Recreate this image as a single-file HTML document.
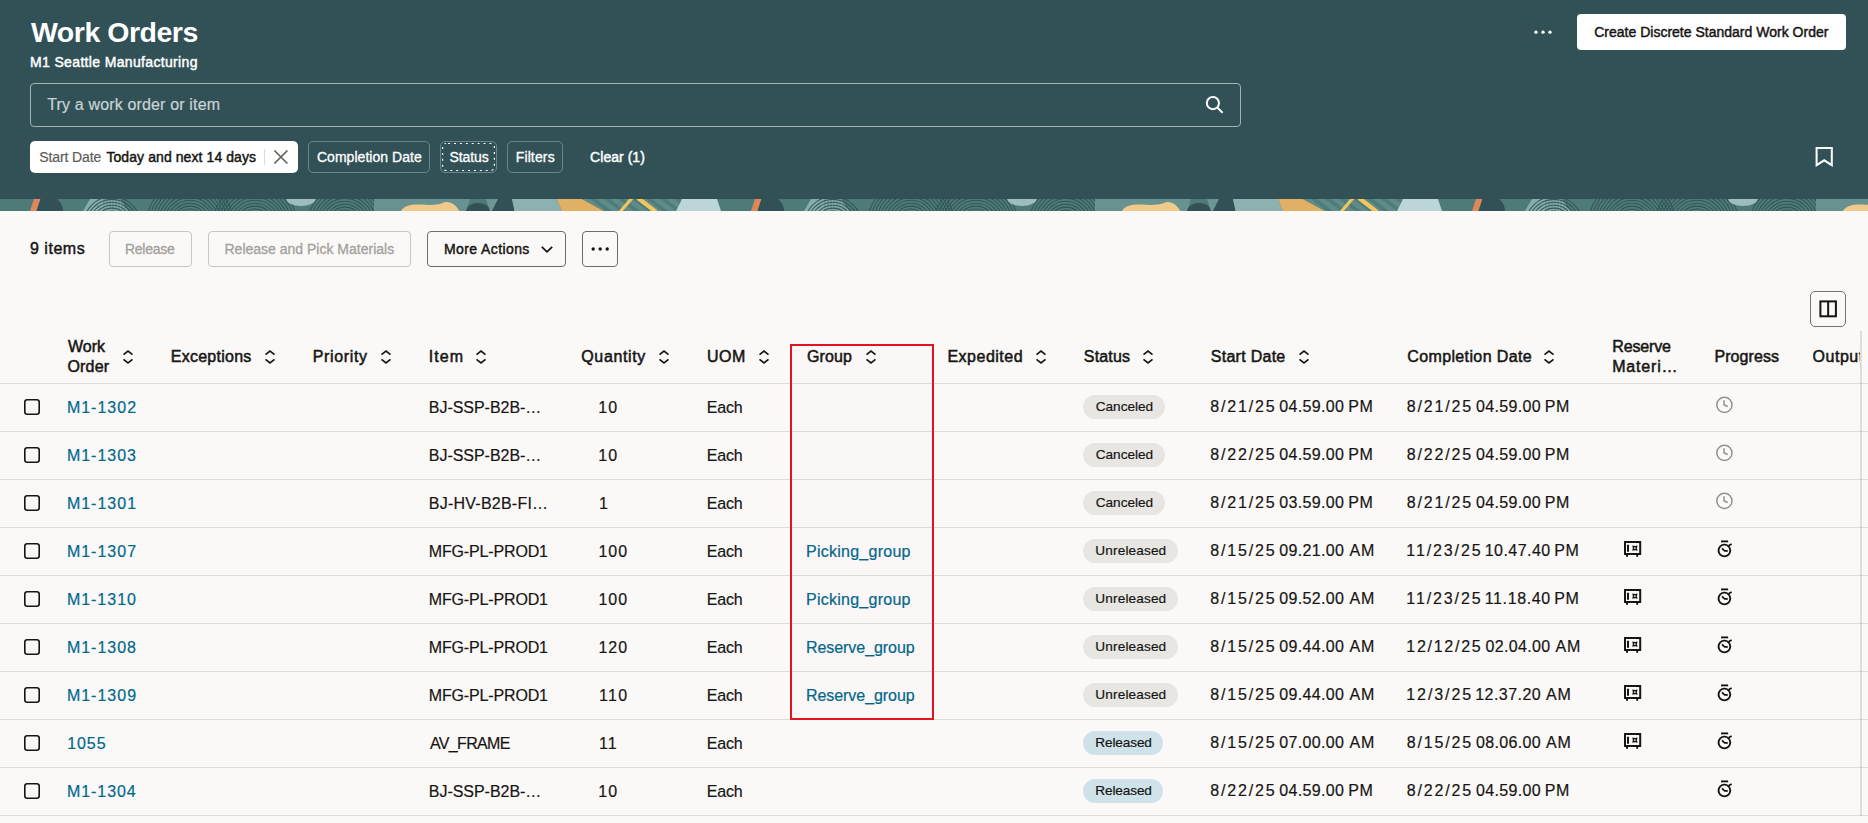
<!DOCTYPE html>
<html lang="en">
<head>
<meta charset="utf-8">
<title>Work Orders</title>
<style>
html,body{margin:0;padding:0}
body{width:1868px;height:823px;overflow:hidden;background:#fbf9f8;font-family:"Liberation Sans",Arial,sans-serif;color:#161513;position:relative}
.t{position:absolute;white-space:pre;line-height:20px;display:block}
a.t{text-decoration:none}
#hdr{position:absolute;left:0;top:0;width:1868px;height:199px;background:#315157}
#strip{position:absolute;left:0;top:199px;width:1868px;height:12px;overflow:hidden;background:#4f7c7a}
.search{position:absolute;left:30px;top:83px;width:1209px;height:42px;border:1px solid #a3b2b5;border-radius:4px}
.cta{position:absolute;left:1577px;top:14px;width:269px;height:36px;border-radius:4px;background:#fff}
.chipw{position:absolute;left:30px;top:141px;width:268px;height:32px;border-radius:5px;background:#fff}
.chip{position:absolute;top:141px;height:30px;border:1px solid #64898c;border-radius:5px}
.chipsep{position:absolute;left:264px;top:149px;width:1px;height:16px;background:#dcd9d6}
.dash{position:absolute;left:2px;top:2px;right:2px;bottom:2px;border:1px dashed #fff;border-radius:4px}
.tbb{position:absolute;top:231px;height:34px;border:1px solid #c9c6c3;border-radius:4px}
.tbb.on{border-color:#6f6b67}
.ck{position:absolute;left:24px;width:12px;height:12px;border:2px solid #161513;border-radius:3px}
.badge{position:absolute;left:1083px;height:24px;border-radius:12px}
.badge.gr{background:#e8e6e3}
.badge.bl{background:#cfe1e9}
.hl{position:absolute;left:0;width:1868px;height:1px;background:#dddbda}
.ic{position:absolute;overflow:visible}
#redbox{z-index:5;position:absolute;left:790px;top:344px;width:140px;height:372px;border:2px solid #e3131f;background:rgba(255,80,80,0.012)}
#vline{position:absolute;left:1860px;top:331px;width:2px;height:485px;background:rgba(22,21,19,0.12)}
.colbtn{position:absolute;left:1810px;top:291px;width:34px;height:34px;border:1px solid #76726e;border-radius:5px}
</style>
</head>
<body>
<header id="hdr">
  <span class="t h1" style="left:30.97px;top:22.20px;font-size:28.5px;letter-spacing:-0.483px;color:#fff;font-weight:700">Work Orders</span>
  <span class="t sub" style="left:30.08px;top:52.30px;font-size:14px;letter-spacing:0.342px;color:#fff;-webkit-text-stroke:0.45px #fff">M1 Seattle Manufacturing</span>
  <div class="search"></div>
  <span class="t ph" style="left:47.24px;top:94.70px;font-size:16px;letter-spacing:0.156px;color:#c9d4d5;-webkit-text-stroke:0.2px #c9d4d5">Try a work order or item</span>
  <svg class="ic" style="left:1200px;top:91px" width="28" height="28" viewBox="1200 91 28 28"><circle cx="1212.9" cy="103.1" r="6.1" fill="none" stroke="#fff" stroke-width="2"/><path d="M1217.4 107.6L1222.6 112.8" stroke="#fff" stroke-width="2" fill="none"/></svg>
  <svg class="ic" style="left:1530px;top:28px" width="26" height="8" viewBox="1530 28 26 8"><circle cx="1536" cy="32.2" r="1.65" fill="#fff"/><circle cx="1543" cy="32.2" r="1.65" fill="#fff"/><circle cx="1550" cy="32.2" r="1.65" fill="#fff"/></svg>
  <div class="cta"></div>
  <span class="t btn" style="left:1594.21px;top:21.70px;font-size:14px;letter-spacing:0.007px;color:#161513;-webkit-text-stroke:0.45px #161513">Create Discrete Standard Work Order</span>
  <div class="chipw"></div><div class="chipsep"></div>
  <span class="t cht" style="left:39.21px;top:147.20px;font-size:14px;letter-spacing:-0.103px;color:#5f5b57;-webkit-text-stroke:0.2px #5f5b57">Start Date</span>
  <span class="t cht" style="left:106.41px;top:147.20px;font-size:14px;letter-spacing:0.085px;color:#161513;-webkit-text-stroke:0.45px #161513">Today and next 14 days</span>
  <svg class="ic" style="left:270px;top:146px" width="22" height="22" viewBox="270 146 22 22"><path d="M274.4 150.5L287.4 163.5M287.4 150.5L274.4 163.5" stroke="#665f5a" stroke-width="1.7" fill="none"/></svg>
  <div class="chip" style="left:308px;width:120px"></div>
  <span class="t cht" style="left:316.94px;top:147.20px;font-size:14px;letter-spacing:0.039px;color:#fff;-webkit-text-stroke:0.3px #fff">Completion Date</span>
  <div class="chip" style="left:440px;width:55px"></div>
  <svg class="ic" style="left:440px;top:141px" width="57" height="32" viewBox="440 141 57 32"><rect x="442.6" y="143.5" width="51.8" height="27" rx="3.5" fill="none" stroke="#fff" stroke-width="1.2" stroke-dasharray="2 3.9" stroke-dashoffset="-2"/></svg>
  <span class="t cht" style="left:449.51px;top:147.20px;font-size:14px;letter-spacing:-0.112px;color:#fff;-webkit-text-stroke:0.3px #fff">Status</span>
  <div class="chip" style="left:507px;width:54px"></div>
  <span class="t cht" style="left:515.70px;top:147.20px;font-size:14px;letter-spacing:0.138px;color:#fff;-webkit-text-stroke:0.3px #fff">Filters</span>
  <span class="t cht" style="left:590.11px;top:147.20px;font-size:14px;letter-spacing:0.033px;color:#fff;-webkit-text-stroke:0.45px #fff">Clear (1)</span>
  <svg class="ic" style="left:1812px;top:144px" width="24" height="26" viewBox="1812 144 24 26"><path d="M1816.6 148H1831.8V165.2L1824.2 160.3L1816.6 165.2Z" fill="none" stroke="#fff" stroke-width="2" stroke-linejoin="miter"/></svg>
</header>
<div id="strip"><svg width="1868" height="12" viewBox="0 0 1868 12" style="display:block"><rect width="1868" height="12" fill="#4e7b78"/><g transform="translate(0,0)"><polygon points="83,12 90,0 120,0 128,12" fill="#86aeac"/><circle cx="112" cy="26" r="14" fill="none" stroke="#315157" stroke-width="1.05" opacity="0.9"/><circle cx="112" cy="26" r="16.9" fill="none" stroke="#315157" stroke-width="1.05" opacity="0.9"/><circle cx="112" cy="26" r="19.799999999999997" fill="none" stroke="#315157" stroke-width="1.05" opacity="0.9"/><circle cx="112" cy="26" r="22.699999999999996" fill="none" stroke="#315157" stroke-width="1.05" opacity="0.9"/><circle cx="112" cy="26" r="25.599999999999994" fill="none" stroke="#315157" stroke-width="1.05" opacity="0.9"/><circle cx="112" cy="26" r="28.499999999999993" fill="none" stroke="#315157" stroke-width="1.05" opacity="0.9"/><circle cx="190" cy="24" r="14" fill="none" stroke="#315157" stroke-width="1.05" opacity="0.9"/><circle cx="190" cy="24" r="16.9" fill="none" stroke="#315157" stroke-width="1.05" opacity="0.9"/><circle cx="190" cy="24" r="19.799999999999997" fill="none" stroke="#315157" stroke-width="1.05" opacity="0.9"/><circle cx="190" cy="24" r="22.699999999999996" fill="none" stroke="#315157" stroke-width="1.05" opacity="0.9"/><circle cx="190" cy="24" r="25.599999999999994" fill="none" stroke="#315157" stroke-width="1.05" opacity="0.9"/><circle cx="190" cy="24" r="28.499999999999993" fill="none" stroke="#315157" stroke-width="1.05" opacity="0.9"/><circle cx="190" cy="24" r="31.39999999999999" fill="none" stroke="#315157" stroke-width="1.05" opacity="0.9"/><circle cx="190" cy="24" r="34.29999999999999" fill="none" stroke="#315157" stroke-width="1.05" opacity="0.9"/><circle cx="190" cy="24" r="37.19999999999999" fill="none" stroke="#315157" stroke-width="1.05" opacity="0.9"/><circle cx="190" cy="24" r="40.09999999999999" fill="none" stroke="#315157" stroke-width="1.05" opacity="0.9"/><circle cx="190" cy="24" r="42.999999999999986" fill="none" stroke="#315157" stroke-width="1.05" opacity="0.9"/><circle cx="255" cy="26" r="16" fill="none" stroke="#315157" stroke-width="1.05" opacity="0.9"/><circle cx="255" cy="26" r="18.9" fill="none" stroke="#315157" stroke-width="1.05" opacity="0.9"/><circle cx="255" cy="26" r="21.799999999999997" fill="none" stroke="#315157" stroke-width="1.05" opacity="0.9"/><circle cx="255" cy="26" r="24.699999999999996" fill="none" stroke="#315157" stroke-width="1.05" opacity="0.9"/><circle cx="255" cy="26" r="27.599999999999994" fill="none" stroke="#315157" stroke-width="1.05" opacity="0.9"/><circle cx="255" cy="26" r="30.499999999999993" fill="none" stroke="#315157" stroke-width="1.05" opacity="0.9"/><circle cx="255" cy="26" r="33.39999999999999" fill="none" stroke="#315157" stroke-width="1.05" opacity="0.9"/><circle cx="255" cy="26" r="36.29999999999999" fill="none" stroke="#315157" stroke-width="1.05" opacity="0.9"/><circle cx="255" cy="26" r="39.19999999999999" fill="none" stroke="#315157" stroke-width="1.05" opacity="0.9"/><circle cx="255" cy="26" r="42.09999999999999" fill="none" stroke="#315157" stroke-width="1.05" opacity="0.9"/><circle cx="345" cy="25" r="14" fill="none" stroke="#315157" stroke-width="1.05" opacity="0.9"/><circle cx="345" cy="25" r="16.9" fill="none" stroke="#315157" stroke-width="1.05" opacity="0.9"/><circle cx="345" cy="25" r="19.799999999999997" fill="none" stroke="#315157" stroke-width="1.05" opacity="0.9"/><circle cx="345" cy="25" r="22.699999999999996" fill="none" stroke="#315157" stroke-width="1.05" opacity="0.9"/><circle cx="345" cy="25" r="25.599999999999994" fill="none" stroke="#315157" stroke-width="1.05" opacity="0.9"/><circle cx="345" cy="25" r="28.499999999999993" fill="none" stroke="#315157" stroke-width="1.05" opacity="0.9"/><circle cx="345" cy="25" r="31.39999999999999" fill="none" stroke="#315157" stroke-width="1.05" opacity="0.9"/><circle cx="345" cy="25" r="34.29999999999999" fill="none" stroke="#315157" stroke-width="1.05" opacity="0.9"/><circle cx="345" cy="25" r="37.19999999999999" fill="none" stroke="#315157" stroke-width="1.05" opacity="0.9"/><path d="M104 0V12" stroke="#315157" stroke-width="0.6" opacity="0.6"/><path d="M107 0V12" stroke="#315157" stroke-width="0.6" opacity="0.6"/><path d="M110 0V12" stroke="#315157" stroke-width="0.6" opacity="0.6"/><path d="M113 0V12" stroke="#315157" stroke-width="0.6" opacity="0.6"/><path d="M116 0V12" stroke="#315157" stroke-width="0.6" opacity="0.6"/><path d="M119 0V12" stroke="#315157" stroke-width="0.6" opacity="0.6"/><path d="M122 0V12" stroke="#315157" stroke-width="0.6" opacity="0.6"/><path d="M125 0V12" stroke="#315157" stroke-width="0.6" opacity="0.6"/><ellipse cx="301" cy="-1" rx="15" ry="8" fill="#9dbebd"/><polygon points="374,0 470,0 466,12 374,12" fill="#67928f"/><path d="M401 12C404 6 412 5 422 5.5C432 6.5 440 5.5 444 3.5C450 1.5 456 6 459.5 12Z" fill="#f0c98c"/><path d="M466 12C468 4 478 2 486 6C489 8 490 10 490 12Z" fill="#315157"/><polygon points="486,0 498,0 492,12 490,12" fill="#6b9693"/><polygon points="498,0 512,0 514.5,12 492,12" fill="#315157"/><polygon points="512,0 557,0 562,12 514.5,12" fill="#8db1b0"/><polygon points="557,0 582,0 604,12 562,12" fill="#e2b065"/><polygon points="582,0 682,0 676,12 604,12" fill="#5f8b88"/><polygon points="590,0 596,0 612,12 606,12" fill="#4b7875" opacity="0.8"/><polygon points="604,0 610,0 626,12 620,12" fill="#4b7875" opacity="0.8"/><polygon points="618,0 624,0 640,12 634,12" fill="#4b7875" opacity="0.8"/><polygon points="632,0 638,0 654,12 648,12" fill="#4b7875" opacity="0.8"/><polygon points="646,0 652,0 668,12 662,12" fill="#4b7875" opacity="0.8"/><polygon points="660,0 666,0 682,12 676,12" fill="#4b7875" opacity="0.8"/><polygon points="674,0 680,0 696,12 690,12" fill="#4b7875" opacity="0.8"/><path d="M620 13L632 -1" stroke="#f2c55c" stroke-width="3.2"/><path d="M638 -1L656 13" stroke="#f2c55c" stroke-width="4.2"/><polygon points="682,0 717,0 721,12 676,12" fill="#bcd6d7"/><polygon points="30,12 36.5,12 40.5,0 34,0" fill="#e0875a"/><path d="M40.5 0H57C61 3 63 8 63 12H36.5Z" fill="#315157"/></g><g transform="translate(721,0)"><polygon points="83,12 90,0 120,0 128,12" fill="#86aeac"/><circle cx="112" cy="26" r="14" fill="none" stroke="#315157" stroke-width="1.05" opacity="0.9"/><circle cx="112" cy="26" r="16.9" fill="none" stroke="#315157" stroke-width="1.05" opacity="0.9"/><circle cx="112" cy="26" r="19.799999999999997" fill="none" stroke="#315157" stroke-width="1.05" opacity="0.9"/><circle cx="112" cy="26" r="22.699999999999996" fill="none" stroke="#315157" stroke-width="1.05" opacity="0.9"/><circle cx="112" cy="26" r="25.599999999999994" fill="none" stroke="#315157" stroke-width="1.05" opacity="0.9"/><circle cx="112" cy="26" r="28.499999999999993" fill="none" stroke="#315157" stroke-width="1.05" opacity="0.9"/><circle cx="190" cy="24" r="14" fill="none" stroke="#315157" stroke-width="1.05" opacity="0.9"/><circle cx="190" cy="24" r="16.9" fill="none" stroke="#315157" stroke-width="1.05" opacity="0.9"/><circle cx="190" cy="24" r="19.799999999999997" fill="none" stroke="#315157" stroke-width="1.05" opacity="0.9"/><circle cx="190" cy="24" r="22.699999999999996" fill="none" stroke="#315157" stroke-width="1.05" opacity="0.9"/><circle cx="190" cy="24" r="25.599999999999994" fill="none" stroke="#315157" stroke-width="1.05" opacity="0.9"/><circle cx="190" cy="24" r="28.499999999999993" fill="none" stroke="#315157" stroke-width="1.05" opacity="0.9"/><circle cx="190" cy="24" r="31.39999999999999" fill="none" stroke="#315157" stroke-width="1.05" opacity="0.9"/><circle cx="190" cy="24" r="34.29999999999999" fill="none" stroke="#315157" stroke-width="1.05" opacity="0.9"/><circle cx="190" cy="24" r="37.19999999999999" fill="none" stroke="#315157" stroke-width="1.05" opacity="0.9"/><circle cx="190" cy="24" r="40.09999999999999" fill="none" stroke="#315157" stroke-width="1.05" opacity="0.9"/><circle cx="190" cy="24" r="42.999999999999986" fill="none" stroke="#315157" stroke-width="1.05" opacity="0.9"/><circle cx="255" cy="26" r="16" fill="none" stroke="#315157" stroke-width="1.05" opacity="0.9"/><circle cx="255" cy="26" r="18.9" fill="none" stroke="#315157" stroke-width="1.05" opacity="0.9"/><circle cx="255" cy="26" r="21.799999999999997" fill="none" stroke="#315157" stroke-width="1.05" opacity="0.9"/><circle cx="255" cy="26" r="24.699999999999996" fill="none" stroke="#315157" stroke-width="1.05" opacity="0.9"/><circle cx="255" cy="26" r="27.599999999999994" fill="none" stroke="#315157" stroke-width="1.05" opacity="0.9"/><circle cx="255" cy="26" r="30.499999999999993" fill="none" stroke="#315157" stroke-width="1.05" opacity="0.9"/><circle cx="255" cy="26" r="33.39999999999999" fill="none" stroke="#315157" stroke-width="1.05" opacity="0.9"/><circle cx="255" cy="26" r="36.29999999999999" fill="none" stroke="#315157" stroke-width="1.05" opacity="0.9"/><circle cx="255" cy="26" r="39.19999999999999" fill="none" stroke="#315157" stroke-width="1.05" opacity="0.9"/><circle cx="255" cy="26" r="42.09999999999999" fill="none" stroke="#315157" stroke-width="1.05" opacity="0.9"/><circle cx="345" cy="25" r="14" fill="none" stroke="#315157" stroke-width="1.05" opacity="0.9"/><circle cx="345" cy="25" r="16.9" fill="none" stroke="#315157" stroke-width="1.05" opacity="0.9"/><circle cx="345" cy="25" r="19.799999999999997" fill="none" stroke="#315157" stroke-width="1.05" opacity="0.9"/><circle cx="345" cy="25" r="22.699999999999996" fill="none" stroke="#315157" stroke-width="1.05" opacity="0.9"/><circle cx="345" cy="25" r="25.599999999999994" fill="none" stroke="#315157" stroke-width="1.05" opacity="0.9"/><circle cx="345" cy="25" r="28.499999999999993" fill="none" stroke="#315157" stroke-width="1.05" opacity="0.9"/><circle cx="345" cy="25" r="31.39999999999999" fill="none" stroke="#315157" stroke-width="1.05" opacity="0.9"/><circle cx="345" cy="25" r="34.29999999999999" fill="none" stroke="#315157" stroke-width="1.05" opacity="0.9"/><circle cx="345" cy="25" r="37.19999999999999" fill="none" stroke="#315157" stroke-width="1.05" opacity="0.9"/><path d="M104 0V12" stroke="#315157" stroke-width="0.6" opacity="0.6"/><path d="M107 0V12" stroke="#315157" stroke-width="0.6" opacity="0.6"/><path d="M110 0V12" stroke="#315157" stroke-width="0.6" opacity="0.6"/><path d="M113 0V12" stroke="#315157" stroke-width="0.6" opacity="0.6"/><path d="M116 0V12" stroke="#315157" stroke-width="0.6" opacity="0.6"/><path d="M119 0V12" stroke="#315157" stroke-width="0.6" opacity="0.6"/><path d="M122 0V12" stroke="#315157" stroke-width="0.6" opacity="0.6"/><path d="M125 0V12" stroke="#315157" stroke-width="0.6" opacity="0.6"/><ellipse cx="301" cy="-1" rx="15" ry="8" fill="#9dbebd"/><polygon points="374,0 470,0 466,12 374,12" fill="#67928f"/><path d="M401 12C404 6 412 5 422 5.5C432 6.5 440 5.5 444 3.5C450 1.5 456 6 459.5 12Z" fill="#f0c98c"/><path d="M466 12C468 4 478 2 486 6C489 8 490 10 490 12Z" fill="#315157"/><polygon points="486,0 498,0 492,12 490,12" fill="#6b9693"/><polygon points="498,0 512,0 514.5,12 492,12" fill="#315157"/><polygon points="512,0 557,0 562,12 514.5,12" fill="#8db1b0"/><polygon points="557,0 582,0 604,12 562,12" fill="#e2b065"/><polygon points="582,0 682,0 676,12 604,12" fill="#5f8b88"/><polygon points="590,0 596,0 612,12 606,12" fill="#4b7875" opacity="0.8"/><polygon points="604,0 610,0 626,12 620,12" fill="#4b7875" opacity="0.8"/><polygon points="618,0 624,0 640,12 634,12" fill="#4b7875" opacity="0.8"/><polygon points="632,0 638,0 654,12 648,12" fill="#4b7875" opacity="0.8"/><polygon points="646,0 652,0 668,12 662,12" fill="#4b7875" opacity="0.8"/><polygon points="660,0 666,0 682,12 676,12" fill="#4b7875" opacity="0.8"/><polygon points="674,0 680,0 696,12 690,12" fill="#4b7875" opacity="0.8"/><path d="M620 13L632 -1" stroke="#f2c55c" stroke-width="3.2"/><path d="M638 -1L656 13" stroke="#f2c55c" stroke-width="4.2"/><polygon points="682,0 717,0 721,12 676,12" fill="#bcd6d7"/><polygon points="30,12 36.5,12 40.5,0 34,0" fill="#e0875a"/><path d="M40.5 0H57C61 3 63 8 63 12H36.5Z" fill="#315157"/></g><g transform="translate(1442,0)"><polygon points="83,12 90,0 120,0 128,12" fill="#86aeac"/><circle cx="112" cy="26" r="14" fill="none" stroke="#315157" stroke-width="1.05" opacity="0.9"/><circle cx="112" cy="26" r="16.9" fill="none" stroke="#315157" stroke-width="1.05" opacity="0.9"/><circle cx="112" cy="26" r="19.799999999999997" fill="none" stroke="#315157" stroke-width="1.05" opacity="0.9"/><circle cx="112" cy="26" r="22.699999999999996" fill="none" stroke="#315157" stroke-width="1.05" opacity="0.9"/><circle cx="112" cy="26" r="25.599999999999994" fill="none" stroke="#315157" stroke-width="1.05" opacity="0.9"/><circle cx="112" cy="26" r="28.499999999999993" fill="none" stroke="#315157" stroke-width="1.05" opacity="0.9"/><circle cx="190" cy="24" r="14" fill="none" stroke="#315157" stroke-width="1.05" opacity="0.9"/><circle cx="190" cy="24" r="16.9" fill="none" stroke="#315157" stroke-width="1.05" opacity="0.9"/><circle cx="190" cy="24" r="19.799999999999997" fill="none" stroke="#315157" stroke-width="1.05" opacity="0.9"/><circle cx="190" cy="24" r="22.699999999999996" fill="none" stroke="#315157" stroke-width="1.05" opacity="0.9"/><circle cx="190" cy="24" r="25.599999999999994" fill="none" stroke="#315157" stroke-width="1.05" opacity="0.9"/><circle cx="190" cy="24" r="28.499999999999993" fill="none" stroke="#315157" stroke-width="1.05" opacity="0.9"/><circle cx="190" cy="24" r="31.39999999999999" fill="none" stroke="#315157" stroke-width="1.05" opacity="0.9"/><circle cx="190" cy="24" r="34.29999999999999" fill="none" stroke="#315157" stroke-width="1.05" opacity="0.9"/><circle cx="190" cy="24" r="37.19999999999999" fill="none" stroke="#315157" stroke-width="1.05" opacity="0.9"/><circle cx="190" cy="24" r="40.09999999999999" fill="none" stroke="#315157" stroke-width="1.05" opacity="0.9"/><circle cx="190" cy="24" r="42.999999999999986" fill="none" stroke="#315157" stroke-width="1.05" opacity="0.9"/><circle cx="255" cy="26" r="16" fill="none" stroke="#315157" stroke-width="1.05" opacity="0.9"/><circle cx="255" cy="26" r="18.9" fill="none" stroke="#315157" stroke-width="1.05" opacity="0.9"/><circle cx="255" cy="26" r="21.799999999999997" fill="none" stroke="#315157" stroke-width="1.05" opacity="0.9"/><circle cx="255" cy="26" r="24.699999999999996" fill="none" stroke="#315157" stroke-width="1.05" opacity="0.9"/><circle cx="255" cy="26" r="27.599999999999994" fill="none" stroke="#315157" stroke-width="1.05" opacity="0.9"/><circle cx="255" cy="26" r="30.499999999999993" fill="none" stroke="#315157" stroke-width="1.05" opacity="0.9"/><circle cx="255" cy="26" r="33.39999999999999" fill="none" stroke="#315157" stroke-width="1.05" opacity="0.9"/><circle cx="255" cy="26" r="36.29999999999999" fill="none" stroke="#315157" stroke-width="1.05" opacity="0.9"/><circle cx="255" cy="26" r="39.19999999999999" fill="none" stroke="#315157" stroke-width="1.05" opacity="0.9"/><circle cx="255" cy="26" r="42.09999999999999" fill="none" stroke="#315157" stroke-width="1.05" opacity="0.9"/><circle cx="345" cy="25" r="14" fill="none" stroke="#315157" stroke-width="1.05" opacity="0.9"/><circle cx="345" cy="25" r="16.9" fill="none" stroke="#315157" stroke-width="1.05" opacity="0.9"/><circle cx="345" cy="25" r="19.799999999999997" fill="none" stroke="#315157" stroke-width="1.05" opacity="0.9"/><circle cx="345" cy="25" r="22.699999999999996" fill="none" stroke="#315157" stroke-width="1.05" opacity="0.9"/><circle cx="345" cy="25" r="25.599999999999994" fill="none" stroke="#315157" stroke-width="1.05" opacity="0.9"/><circle cx="345" cy="25" r="28.499999999999993" fill="none" stroke="#315157" stroke-width="1.05" opacity="0.9"/><circle cx="345" cy="25" r="31.39999999999999" fill="none" stroke="#315157" stroke-width="1.05" opacity="0.9"/><circle cx="345" cy="25" r="34.29999999999999" fill="none" stroke="#315157" stroke-width="1.05" opacity="0.9"/><circle cx="345" cy="25" r="37.19999999999999" fill="none" stroke="#315157" stroke-width="1.05" opacity="0.9"/><path d="M104 0V12" stroke="#315157" stroke-width="0.6" opacity="0.6"/><path d="M107 0V12" stroke="#315157" stroke-width="0.6" opacity="0.6"/><path d="M110 0V12" stroke="#315157" stroke-width="0.6" opacity="0.6"/><path d="M113 0V12" stroke="#315157" stroke-width="0.6" opacity="0.6"/><path d="M116 0V12" stroke="#315157" stroke-width="0.6" opacity="0.6"/><path d="M119 0V12" stroke="#315157" stroke-width="0.6" opacity="0.6"/><path d="M122 0V12" stroke="#315157" stroke-width="0.6" opacity="0.6"/><path d="M125 0V12" stroke="#315157" stroke-width="0.6" opacity="0.6"/><ellipse cx="301" cy="-1" rx="15" ry="8" fill="#9dbebd"/><polygon points="374,0 470,0 466,12 374,12" fill="#67928f"/><path d="M401 12C404 6 412 5 422 5.5C432 6.5 440 5.5 444 3.5C450 1.5 456 6 459.5 12Z" fill="#f0c98c"/><path d="M466 12C468 4 478 2 486 6C489 8 490 10 490 12Z" fill="#315157"/><polygon points="486,0 498,0 492,12 490,12" fill="#6b9693"/><polygon points="498,0 512,0 514.5,12 492,12" fill="#315157"/><polygon points="512,0 557,0 562,12 514.5,12" fill="#8db1b0"/><polygon points="557,0 582,0 604,12 562,12" fill="#e2b065"/><polygon points="582,0 682,0 676,12 604,12" fill="#5f8b88"/><polygon points="590,0 596,0 612,12 606,12" fill="#4b7875" opacity="0.8"/><polygon points="604,0 610,0 626,12 620,12" fill="#4b7875" opacity="0.8"/><polygon points="618,0 624,0 640,12 634,12" fill="#4b7875" opacity="0.8"/><polygon points="632,0 638,0 654,12 648,12" fill="#4b7875" opacity="0.8"/><polygon points="646,0 652,0 668,12 662,12" fill="#4b7875" opacity="0.8"/><polygon points="660,0 666,0 682,12 676,12" fill="#4b7875" opacity="0.8"/><polygon points="674,0 680,0 696,12 690,12" fill="#4b7875" opacity="0.8"/><path d="M620 13L632 -1" stroke="#f2c55c" stroke-width="3.2"/><path d="M638 -1L656 13" stroke="#f2c55c" stroke-width="4.2"/><polygon points="682,0 717,0 721,12 676,12" fill="#bcd6d7"/><polygon points="30,12 36.5,12 40.5,0 34,0" fill="#e0875a"/><path d="M40.5 0H57C61 3 63 8 63 12H36.5Z" fill="#315157"/></g></svg></div>
<section id="toolbar">
  <span class="t cnt" style="left:29.98px;top:238.95px;font-size:16px;letter-spacing:0.517px;color:#161513;-webkit-text-stroke:0.45px #161513">9 items</span>
  <div class="tbb" style="left:109px;width:81px"></div><span class="t tb" style="left:125.00px;top:239.20px;font-size:14px;letter-spacing:-0.267px;color:#a3a09c;-webkit-text-stroke:0.3px #a3a09c">Release</span>
  <div class="tbb" style="left:208px;width:201px"></div><span class="t tb" style="left:224.50px;top:239.20px;font-size:14px;letter-spacing:0.001px;color:#a3a09c;-webkit-text-stroke:0.3px #a3a09c">Release and Pick Materials</span>
  <div class="tbb on" style="left:427px;width:137px"></div><span class="t tb" style="left:443.88px;top:239.20px;font-size:14px;letter-spacing:0.415px;color:#161513;-webkit-text-stroke:0.45px #161513">More Actions</span>
  <svg class="ic" style="left:538px;top:242px" width="18" height="14" viewBox="538 242 18 14"><path d="M541.8 246.8L547 251.8L552.2 246.8" fill="none" stroke="#161513" stroke-width="1.8"/></svg>
  <div class="tbb on" style="left:582px;width:34px"></div>
  <svg class="ic" style="left:588px;top:244px" width="26" height="10" viewBox="588 244 26 10"><circle cx="593.2" cy="249" r="1.7" fill="#161513"/><circle cx="600.2" cy="249" r="1.7" fill="#161513"/><circle cx="607.2" cy="249" r="1.7" fill="#161513"/></svg>
  <div class="colbtn"></div>
  <svg class="ic" style="left:1816px;top:297px" width="24" height="24" viewBox="1816 297 24 24"><rect x="1820.4" y="301.4" width="15.5" height="14.9" fill="none" stroke="#161513" stroke-width="2"/><path d="M1828.15 301.4V316.3" stroke="#161513" stroke-width="2"/></svg>
</section>
<main id="table">
  <div id="redbox"></div>
  <span class="t th" style="left:67.98px;top:336.70px;font-size:16px;letter-spacing:0.030px;color:#161513;-webkit-text-stroke:0.51px #161513">Work</span>
<span class="t th" style="left:67.50px;top:356.70px;font-size:16px;letter-spacing:0.152px;color:#161513;-webkit-text-stroke:0.51px #161513">Order</span>
<span class="t th" style="left:170.69px;top:346.70px;font-size:16px;letter-spacing:0.268px;color:#161513;-webkit-text-stroke:0.51px #161513">Exceptions</span>
<span class="t th" style="left:312.69px;top:346.70px;font-size:16px;letter-spacing:0.658px;color:#161513;-webkit-text-stroke:0.51px #161513">Priority</span>
<span class="t th" style="left:428.78px;top:346.70px;font-size:16px;letter-spacing:1.065px;color:#161513;-webkit-text-stroke:0.51px #161513">Item</span>
<span class="t th" style="left:581.25px;top:346.70px;font-size:16px;letter-spacing:0.641px;color:#161513;-webkit-text-stroke:0.51px #161513">Quantity</span>
<span class="t th" style="left:707.02px;top:346.70px;font-size:16px;letter-spacing:0.504px;color:#161513;-webkit-text-stroke:0.51px #161513">UOM</span>
<span class="t th" style="left:806.95px;top:346.70px;font-size:16px;letter-spacing:0.137px;color:#161513;-webkit-text-stroke:0.51px #161513">Group</span>
<span class="t th" style="left:947.44px;top:346.70px;font-size:16px;letter-spacing:0.495px;color:#161513;-webkit-text-stroke:0.51px #161513">Expedited</span>
<span class="t th" style="left:1083.78px;top:346.70px;font-size:16px;letter-spacing:0.197px;color:#161513;-webkit-text-stroke:0.51px #161513">Status</span>
<span class="t th" style="left:1210.78px;top:346.70px;font-size:16px;letter-spacing:0.272px;color:#161513;-webkit-text-stroke:0.51px #161513">Start Date</span>
<span class="t th" style="left:1407.24px;top:346.70px;font-size:16px;letter-spacing:0.374px;color:#161513;-webkit-text-stroke:0.51px #161513">Completion Date</span>
<span class="t th" style="left:1612.24px;top:336.70px;font-size:16px;letter-spacing:-0.144px;color:#161513;-webkit-text-stroke:0.51px #161513">Reserve</span>
<span class="t th" style="left:1612.24px;top:356.70px;font-size:16px;letter-spacing:0.804px;color:#161513;-webkit-text-stroke:0.51px #161513">Materi…</span>
<span class="t th" style="left:1714.44px;top:346.70px;font-size:16px;letter-spacing:0.093px;color:#161513;-webkit-text-stroke:0.51px #161513">Progress</span>
<span class="t th" style="left:1812.60px;top:346.70px;font-size:16px;letter-spacing:0.507px;color:#161513;-webkit-text-stroke:0.51px #161513;width:47.9px;overflow:hidden">Output</span>
  <svg class="ic" style="left:119.90px;top:348.9px" width="16" height="16" viewBox="-8 -8 16 16"><path d="M-4.5 -2.3L0 -5.8L4.5 -2.3M-4.5 2.4L0 5.9L4.5 2.4" fill="none" stroke="#161513" stroke-width="1.7"/></svg>
<svg class="ic" style="left:262.00px;top:348.9px" width="16" height="16" viewBox="-8 -8 16 16"><path d="M-4.5 -2.3L0 -5.8L4.5 -2.3M-4.5 2.4L0 5.9L4.5 2.4" fill="none" stroke="#161513" stroke-width="1.7"/></svg>
<svg class="ic" style="left:378.25px;top:348.9px" width="16" height="16" viewBox="-8 -8 16 16"><path d="M-4.5 -2.3L0 -5.8L4.5 -2.3M-4.5 2.4L0 5.9L4.5 2.4" fill="none" stroke="#161513" stroke-width="1.7"/></svg>
<svg class="ic" style="left:472.60px;top:348.9px" width="16" height="16" viewBox="-8 -8 16 16"><path d="M-4.5 -2.3L0 -5.8L4.5 -2.3M-4.5 2.4L0 5.9L4.5 2.4" fill="none" stroke="#161513" stroke-width="1.7"/></svg>
<svg class="ic" style="left:656.25px;top:348.9px" width="16" height="16" viewBox="-8 -8 16 16"><path d="M-4.5 -2.3L0 -5.8L4.5 -2.3M-4.5 2.4L0 5.9L4.5 2.4" fill="none" stroke="#161513" stroke-width="1.7"/></svg>
<svg class="ic" style="left:755.50px;top:348.9px" width="16" height="16" viewBox="-8 -8 16 16"><path d="M-4.5 -2.3L0 -5.8L4.5 -2.3M-4.5 2.4L0 5.9L4.5 2.4" fill="none" stroke="#161513" stroke-width="1.7"/></svg>
<svg class="ic" style="left:862.50px;top:348.9px" width="16" height="16" viewBox="-8 -8 16 16"><path d="M-4.5 -2.3L0 -5.8L4.5 -2.3M-4.5 2.4L0 5.9L4.5 2.4" fill="none" stroke="#161513" stroke-width="1.7"/></svg>
<svg class="ic" style="left:1032.50px;top:348.9px" width="16" height="16" viewBox="-8 -8 16 16"><path d="M-4.5 -2.3L0 -5.8L4.5 -2.3M-4.5 2.4L0 5.9L4.5 2.4" fill="none" stroke="#161513" stroke-width="1.7"/></svg>
<svg class="ic" style="left:1140.25px;top:348.9px" width="16" height="16" viewBox="-8 -8 16 16"><path d="M-4.5 -2.3L0 -5.8L4.5 -2.3M-4.5 2.4L0 5.9L4.5 2.4" fill="none" stroke="#161513" stroke-width="1.7"/></svg>
<svg class="ic" style="left:1295.75px;top:348.9px" width="16" height="16" viewBox="-8 -8 16 16"><path d="M-4.5 -2.3L0 -5.8L4.5 -2.3M-4.5 2.4L0 5.9L4.5 2.4" fill="none" stroke="#161513" stroke-width="1.7"/></svg>
<svg class="ic" style="left:1541.40px;top:348.9px" width="16" height="16" viewBox="-8 -8 16 16"><path d="M-4.5 -2.3L0 -5.8L4.5 -2.3M-4.5 2.4L0 5.9L4.5 2.4" fill="none" stroke="#161513" stroke-width="1.7"/></svg>
  <div class="hl" style="top:383px"></div>
  <div role="row">
<svg class="ic" style="left:24px;top:399px" width="16" height="16" viewBox="0 0 16 16"><rect x="0.8" y="0.8" width="14.4" height="14.4" rx="2.4" fill="none" stroke="#161513" stroke-width="1.6"/></svg>
<div class="badge gr" style="top:395px;width:82px"></div>
<a href="#" class="t td" style="left:66.89px;top:397.70px;font-size:16px;letter-spacing:1.010px;color:#00688c;-webkit-text-stroke:0.2px #00688c">M1-1302</a>
<span class="t td" style="left:428.79px;top:397.70px;font-size:16px;letter-spacing:-0.031px;color:#161513;-webkit-text-stroke:0.2px #161513">BJ-SSP-B2B-…</span>
<span class="t td" style="left:598.13px;top:397.70px;font-size:16px;letter-spacing:1.147px;color:#161513;-webkit-text-stroke:0.2px #161513">10</span>
<span class="t td" style="left:706.79px;top:397.70px;font-size:16px;letter-spacing:-0.172px;color:#161513;-webkit-text-stroke:0.2px #161513">Each</span>
<span class="t bd" style="left:1095.71px;top:397.00px;font-size:13.6px;letter-spacing:0.004px;color:#161513;-webkit-text-stroke:0.2px #161513">Canceled</span>
<span class="t tdd" style="left:1210.20px;top:396.70px;font-size:16px;letter-spacing:1.829px;color:#161513;-webkit-text-stroke:0.2px #161513">8/21/25</span>
<span class="t tdd" style="left:1279.27px;top:396.70px;font-size:16px;letter-spacing:0.353px;color:#161513;-webkit-text-stroke:0.2px #161513">04.59.00</span>
<span class="t tdd" style="left:1348.19px;top:396.70px;font-size:16px;letter-spacing:0.625px;color:#161513;-webkit-text-stroke:0.2px #161513">PM</span>
<span class="t tdd" style="left:1406.80px;top:396.70px;font-size:16px;letter-spacing:1.829px;color:#161513;-webkit-text-stroke:0.2px #161513">8/21/25</span>
<span class="t tdd" style="left:1475.88px;top:396.70px;font-size:16px;letter-spacing:0.353px;color:#161513;-webkit-text-stroke:0.2px #161513">04.59.00</span>
<span class="t tdd" style="left:1544.79px;top:396.70px;font-size:16px;letter-spacing:0.625px;color:#161513;-webkit-text-stroke:0.2px #161513">PM</span>
<svg class="ic" style="left:1712px;top:393px" width="24" height="24" viewBox="0 0 24 24"><g fill="none" stroke="#95918d" stroke-width="1.5"><circle cx="12.4" cy="11.95" r="7.6"/><path d="M12.1 7.2V12L15.7 13.5"/></g></svg>
<div class="hl" style="top:431px"></div>
</div>
<div role="row">
<svg class="ic" style="left:24px;top:447px" width="16" height="16" viewBox="0 0 16 16"><rect x="0.8" y="0.8" width="14.4" height="14.4" rx="2.4" fill="none" stroke="#161513" stroke-width="1.6"/></svg>
<div class="badge gr" style="top:443px;width:82px"></div>
<a href="#" class="t td" style="left:66.89px;top:445.70px;font-size:16px;letter-spacing:0.993px;color:#00688c;-webkit-text-stroke:0.2px #00688c">M1-1303</a>
<span class="t td" style="left:428.79px;top:445.70px;font-size:16px;letter-spacing:-0.031px;color:#161513;-webkit-text-stroke:0.2px #161513">BJ-SSP-B2B-…</span>
<span class="t td" style="left:598.13px;top:445.70px;font-size:16px;letter-spacing:1.147px;color:#161513;-webkit-text-stroke:0.2px #161513">10</span>
<span class="t td" style="left:706.79px;top:445.70px;font-size:16px;letter-spacing:-0.172px;color:#161513;-webkit-text-stroke:0.2px #161513">Each</span>
<span class="t bd" style="left:1095.71px;top:445.00px;font-size:13.6px;letter-spacing:0.004px;color:#161513;-webkit-text-stroke:0.2px #161513">Canceled</span>
<span class="t tdd" style="left:1210.20px;top:444.70px;font-size:16px;letter-spacing:1.829px;color:#161513;-webkit-text-stroke:0.2px #161513">8/22/25</span>
<span class="t tdd" style="left:1279.27px;top:444.70px;font-size:16px;letter-spacing:0.353px;color:#161513;-webkit-text-stroke:0.2px #161513">04.59.00</span>
<span class="t tdd" style="left:1348.19px;top:444.70px;font-size:16px;letter-spacing:0.625px;color:#161513;-webkit-text-stroke:0.2px #161513">PM</span>
<span class="t tdd" style="left:1406.80px;top:444.70px;font-size:16px;letter-spacing:1.829px;color:#161513;-webkit-text-stroke:0.2px #161513">8/22/25</span>
<span class="t tdd" style="left:1475.88px;top:444.70px;font-size:16px;letter-spacing:0.353px;color:#161513;-webkit-text-stroke:0.2px #161513">04.59.00</span>
<span class="t tdd" style="left:1544.79px;top:444.70px;font-size:16px;letter-spacing:0.625px;color:#161513;-webkit-text-stroke:0.2px #161513">PM</span>
<svg class="ic" style="left:1712px;top:441px" width="24" height="24" viewBox="0 0 24 24"><g fill="none" stroke="#95918d" stroke-width="1.5"><circle cx="12.4" cy="11.95" r="7.6"/><path d="M12.1 7.2V12L15.7 13.5"/></g></svg>
<div class="hl" style="top:479px"></div>
</div>
<div role="row">
<svg class="ic" style="left:24px;top:495px" width="16" height="16" viewBox="0 0 16 16"><rect x="0.8" y="0.8" width="14.4" height="14.4" rx="2.4" fill="none" stroke="#161513" stroke-width="1.6"/></svg>
<div class="badge gr" style="top:491px;width:82px"></div>
<a href="#" class="t td" style="left:66.89px;top:493.70px;font-size:16px;letter-spacing:1.006px;color:#00688c;-webkit-text-stroke:0.2px #00688c">M1-1301</a>
<span class="t td" style="left:428.79px;top:493.70px;font-size:16px;letter-spacing:0.239px;color:#161513;-webkit-text-stroke:0.2px #161513">BJ-HV-B2B-FI…</span>
<span class="t td" style="left:598.88px;top:493.70px;font-size:16px;letter-spacing:-0.556px;color:#161513;-webkit-text-stroke:0.2px #161513">1</span>
<span class="t td" style="left:706.79px;top:493.70px;font-size:16px;letter-spacing:-0.172px;color:#161513;-webkit-text-stroke:0.2px #161513">Each</span>
<span class="t bd" style="left:1095.71px;top:493.00px;font-size:13.6px;letter-spacing:0.004px;color:#161513;-webkit-text-stroke:0.2px #161513">Canceled</span>
<span class="t tdd" style="left:1210.20px;top:492.70px;font-size:16px;letter-spacing:1.829px;color:#161513;-webkit-text-stroke:0.2px #161513">8/21/25</span>
<span class="t tdd" style="left:1279.27px;top:492.70px;font-size:16px;letter-spacing:0.353px;color:#161513;-webkit-text-stroke:0.2px #161513">03.59.00</span>
<span class="t tdd" style="left:1348.19px;top:492.70px;font-size:16px;letter-spacing:0.625px;color:#161513;-webkit-text-stroke:0.2px #161513">PM</span>
<span class="t tdd" style="left:1406.80px;top:492.70px;font-size:16px;letter-spacing:1.829px;color:#161513;-webkit-text-stroke:0.2px #161513">8/21/25</span>
<span class="t tdd" style="left:1475.88px;top:492.70px;font-size:16px;letter-spacing:0.353px;color:#161513;-webkit-text-stroke:0.2px #161513">04.59.00</span>
<span class="t tdd" style="left:1544.79px;top:492.70px;font-size:16px;letter-spacing:0.625px;color:#161513;-webkit-text-stroke:0.2px #161513">PM</span>
<svg class="ic" style="left:1712px;top:489px" width="24" height="24" viewBox="0 0 24 24"><g fill="none" stroke="#95918d" stroke-width="1.5"><circle cx="12.4" cy="11.95" r="7.6"/><path d="M12.1 7.2V12L15.7 13.5"/></g></svg>
<div class="hl" style="top:527px"></div>
</div>
<div role="row">
<svg class="ic" style="left:24px;top:543px" width="16" height="16" viewBox="0 0 16 16"><rect x="0.8" y="0.8" width="14.4" height="14.4" rx="2.4" fill="none" stroke="#161513" stroke-width="1.6"/></svg>
<div class="badge gr" style="top:539px;width:95px"></div>
<a href="#" class="t td" style="left:66.89px;top:541.70px;font-size:16px;letter-spacing:1.010px;color:#00688c;-webkit-text-stroke:0.2px #00688c">M1-1307</a>
<span class="t td" style="left:428.79px;top:541.70px;font-size:16px;letter-spacing:-0.156px;color:#161513;-webkit-text-stroke:0.2px #161513">MFG-PL-PROD1</span>
<span class="t td" style="left:598.38px;top:541.70px;font-size:16px;letter-spacing:0.995px;color:#161513;-webkit-text-stroke:0.2px #161513">100</span>
<span class="t td" style="left:706.79px;top:541.70px;font-size:16px;letter-spacing:-0.172px;color:#161513;-webkit-text-stroke:0.2px #161513">Each</span>
<a href="#" class="t td" style="left:805.99px;top:541.70px;font-size:16px;letter-spacing:0.257px;color:#00688c;-webkit-text-stroke:0.2px #00688c">Picking_group</a>
<span class="t bd" style="left:1095.35px;top:541.00px;font-size:13.6px;letter-spacing:0.144px;color:#161513;-webkit-text-stroke:0.2px #161513">Unreleased</span>
<span class="t tdd" style="left:1210.20px;top:540.70px;font-size:16px;letter-spacing:1.829px;color:#161513;-webkit-text-stroke:0.2px #161513">8/15/25</span>
<span class="t tdd" style="left:1279.27px;top:540.70px;font-size:16px;letter-spacing:0.353px;color:#161513;-webkit-text-stroke:0.2px #161513">09.21.00</span>
<span class="t tdd" style="left:1349.47px;top:540.70px;font-size:16px;letter-spacing:0.744px;color:#161513;-webkit-text-stroke:0.2px #161513">AM</span>
<span class="t tdd" style="left:1406.28px;top:540.70px;font-size:16px;letter-spacing:1.900px;color:#161513;-webkit-text-stroke:0.2px #161513">11/23/25</span>
<span class="t tdd" style="left:1484.78px;top:540.70px;font-size:16px;letter-spacing:0.438px;color:#161513;-webkit-text-stroke:0.2px #161513">10.47.40</span>
<span class="t tdd" style="left:1554.29px;top:540.70px;font-size:16px;letter-spacing:0.625px;color:#161513;-webkit-text-stroke:0.2px #161513">PM</span>
<svg class="ic" style="left:1620px;top:536px" width="24" height="24" viewBox="0 0 24 24"><g fill="none" stroke="#161513" stroke-width="2"><rect x="5" y="6" width="15.2" height="12"/><path d="M8 8.8V15.8" /><path d="M7 19V20.8M17.2 19V20.8"/></g><g fill="none" stroke="#161513"><circle cx="14.9" cy="12.1" r="1.6" stroke-width="1.4"/><path d="M12.5 9.7L13.7 10.9M17.3 9.7L16.1 10.9M12.5 14.5L13.7 13.3M17.3 14.5L16.1 13.3" stroke-width="1.3"/></g></svg>
<svg class="ic" style="left:1712px;top:537px" width="24" height="24" viewBox="0 0 24 24"><g fill="none" stroke="#161513" stroke-width="1.9"><circle cx="12.4" cy="13.5" r="5.85"/><path d="M9 4.4H16.15"/><path d="M16.6 8.8L19.6 7"/><path d="M9.9 11.4L12.7 13.9H15.8" stroke-width="1.7"/></g></svg>
<div class="hl" style="top:575px"></div>
</div>
<div role="row">
<svg class="ic" style="left:24px;top:591px" width="16" height="16" viewBox="0 0 16 16"><rect x="0.8" y="0.8" width="14.4" height="14.4" rx="2.4" fill="none" stroke="#161513" stroke-width="1.6"/></svg>
<div class="badge gr" style="top:587px;width:95px"></div>
<a href="#" class="t td" style="left:66.89px;top:589.70px;font-size:16px;letter-spacing:0.980px;color:#00688c;-webkit-text-stroke:0.2px #00688c">M1-1310</a>
<span class="t td" style="left:428.79px;top:589.70px;font-size:16px;letter-spacing:-0.156px;color:#161513;-webkit-text-stroke:0.2px #161513">MFG-PL-PROD1</span>
<span class="t td" style="left:598.38px;top:589.70px;font-size:16px;letter-spacing:0.995px;color:#161513;-webkit-text-stroke:0.2px #161513">100</span>
<span class="t td" style="left:706.79px;top:589.70px;font-size:16px;letter-spacing:-0.172px;color:#161513;-webkit-text-stroke:0.2px #161513">Each</span>
<a href="#" class="t td" style="left:805.99px;top:589.70px;font-size:16px;letter-spacing:0.257px;color:#00688c;-webkit-text-stroke:0.2px #00688c">Picking_group</a>
<span class="t bd" style="left:1095.35px;top:589.00px;font-size:13.6px;letter-spacing:0.144px;color:#161513;-webkit-text-stroke:0.2px #161513">Unreleased</span>
<span class="t tdd" style="left:1210.20px;top:588.70px;font-size:16px;letter-spacing:1.829px;color:#161513;-webkit-text-stroke:0.2px #161513">8/15/25</span>
<span class="t tdd" style="left:1279.27px;top:588.70px;font-size:16px;letter-spacing:0.353px;color:#161513;-webkit-text-stroke:0.2px #161513">09.52.00</span>
<span class="t tdd" style="left:1349.47px;top:588.70px;font-size:16px;letter-spacing:0.744px;color:#161513;-webkit-text-stroke:0.2px #161513">AM</span>
<span class="t tdd" style="left:1406.28px;top:588.70px;font-size:16px;letter-spacing:1.900px;color:#161513;-webkit-text-stroke:0.2px #161513">11/23/25</span>
<span class="t tdd" style="left:1484.78px;top:588.70px;font-size:16px;letter-spacing:0.607px;color:#161513;-webkit-text-stroke:0.2px #161513">11.18.40</span>
<span class="t tdd" style="left:1554.29px;top:588.70px;font-size:16px;letter-spacing:0.625px;color:#161513;-webkit-text-stroke:0.2px #161513">PM</span>
<svg class="ic" style="left:1620px;top:584px" width="24" height="24" viewBox="0 0 24 24"><g fill="none" stroke="#161513" stroke-width="2"><rect x="5" y="6" width="15.2" height="12"/><path d="M8 8.8V15.8" /><path d="M7 19V20.8M17.2 19V20.8"/></g><g fill="none" stroke="#161513"><circle cx="14.9" cy="12.1" r="1.6" stroke-width="1.4"/><path d="M12.5 9.7L13.7 10.9M17.3 9.7L16.1 10.9M12.5 14.5L13.7 13.3M17.3 14.5L16.1 13.3" stroke-width="1.3"/></g></svg>
<svg class="ic" style="left:1712px;top:585px" width="24" height="24" viewBox="0 0 24 24"><g fill="none" stroke="#161513" stroke-width="1.9"><circle cx="12.4" cy="13.5" r="5.85"/><path d="M9 4.4H16.15"/><path d="M16.6 8.8L19.6 7"/><path d="M9.9 11.4L12.7 13.9H15.8" stroke-width="1.7"/></g></svg>
<div class="hl" style="top:623px"></div>
</div>
<div role="row">
<svg class="ic" style="left:24px;top:639px" width="16" height="16" viewBox="0 0 16 16"><rect x="0.8" y="0.8" width="14.4" height="14.4" rx="2.4" fill="none" stroke="#161513" stroke-width="1.6"/></svg>
<div class="badge gr" style="top:635px;width:95px"></div>
<a href="#" class="t td" style="left:66.89px;top:637.70px;font-size:16px;letter-spacing:0.992px;color:#00688c;-webkit-text-stroke:0.2px #00688c">M1-1308</a>
<span class="t td" style="left:428.79px;top:637.70px;font-size:16px;letter-spacing:-0.156px;color:#161513;-webkit-text-stroke:0.2px #161513">MFG-PL-PROD1</span>
<span class="t td" style="left:598.38px;top:637.70px;font-size:16px;letter-spacing:0.995px;color:#161513;-webkit-text-stroke:0.2px #161513">120</span>
<span class="t td" style="left:706.79px;top:637.70px;font-size:16px;letter-spacing:-0.172px;color:#161513;-webkit-text-stroke:0.2px #161513">Each</span>
<a href="#" class="t td" style="left:805.99px;top:637.70px;font-size:16px;letter-spacing:-0.060px;color:#00688c;-webkit-text-stroke:0.2px #00688c">Reserve_group</a>
<span class="t bd" style="left:1095.35px;top:637.00px;font-size:13.6px;letter-spacing:0.144px;color:#161513;-webkit-text-stroke:0.2px #161513">Unreleased</span>
<span class="t tdd" style="left:1210.20px;top:636.70px;font-size:16px;letter-spacing:1.829px;color:#161513;-webkit-text-stroke:0.2px #161513">8/15/25</span>
<span class="t tdd" style="left:1279.27px;top:636.70px;font-size:16px;letter-spacing:0.353px;color:#161513;-webkit-text-stroke:0.2px #161513">09.44.00</span>
<span class="t tdd" style="left:1349.47px;top:636.70px;font-size:16px;letter-spacing:0.744px;color:#161513;-webkit-text-stroke:0.2px #161513">AM</span>
<span class="t tdd" style="left:1406.28px;top:636.70px;font-size:16px;letter-spacing:1.730px;color:#161513;-webkit-text-stroke:0.2px #161513">12/12/25</span>
<span class="t tdd" style="left:1485.38px;top:636.70px;font-size:16px;letter-spacing:0.353px;color:#161513;-webkit-text-stroke:0.2px #161513">02.04.00</span>
<span class="t tdd" style="left:1555.57px;top:636.70px;font-size:16px;letter-spacing:0.744px;color:#161513;-webkit-text-stroke:0.2px #161513">AM</span>
<svg class="ic" style="left:1620px;top:632px" width="24" height="24" viewBox="0 0 24 24"><g fill="none" stroke="#161513" stroke-width="2"><rect x="5" y="6" width="15.2" height="12"/><path d="M8 8.8V15.8" /><path d="M7 19V20.8M17.2 19V20.8"/></g><g fill="none" stroke="#161513"><circle cx="14.9" cy="12.1" r="1.6" stroke-width="1.4"/><path d="M12.5 9.7L13.7 10.9M17.3 9.7L16.1 10.9M12.5 14.5L13.7 13.3M17.3 14.5L16.1 13.3" stroke-width="1.3"/></g></svg>
<svg class="ic" style="left:1712px;top:633px" width="24" height="24" viewBox="0 0 24 24"><g fill="none" stroke="#161513" stroke-width="1.9"><circle cx="12.4" cy="13.5" r="5.85"/><path d="M9 4.4H16.15"/><path d="M16.6 8.8L19.6 7"/><path d="M9.9 11.4L12.7 13.9H15.8" stroke-width="1.7"/></g></svg>
<div class="hl" style="top:671px"></div>
</div>
<div role="row">
<svg class="ic" style="left:24px;top:687px" width="16" height="16" viewBox="0 0 16 16"><rect x="0.8" y="0.8" width="14.4" height="14.4" rx="2.4" fill="none" stroke="#161513" stroke-width="1.6"/></svg>
<div class="badge gr" style="top:683px;width:95px"></div>
<a href="#" class="t td" style="left:66.89px;top:685.70px;font-size:16px;letter-spacing:1.002px;color:#00688c;-webkit-text-stroke:0.2px #00688c">M1-1309</a>
<span class="t td" style="left:428.79px;top:685.70px;font-size:16px;letter-spacing:-0.156px;color:#161513;-webkit-text-stroke:0.2px #161513">MFG-PL-PROD1</span>
<span class="t td" style="left:598.88px;top:685.70px;font-size:16px;letter-spacing:1.339px;color:#161513;-webkit-text-stroke:0.2px #161513">110</span>
<span class="t td" style="left:706.79px;top:685.70px;font-size:16px;letter-spacing:-0.172px;color:#161513;-webkit-text-stroke:0.2px #161513">Each</span>
<a href="#" class="t td" style="left:805.99px;top:685.70px;font-size:16px;letter-spacing:-0.060px;color:#00688c;-webkit-text-stroke:0.2px #00688c">Reserve_group</a>
<span class="t bd" style="left:1095.35px;top:685.00px;font-size:13.6px;letter-spacing:0.144px;color:#161513;-webkit-text-stroke:0.2px #161513">Unreleased</span>
<span class="t tdd" style="left:1210.20px;top:684.70px;font-size:16px;letter-spacing:1.829px;color:#161513;-webkit-text-stroke:0.2px #161513">8/15/25</span>
<span class="t tdd" style="left:1279.27px;top:684.70px;font-size:16px;letter-spacing:0.353px;color:#161513;-webkit-text-stroke:0.2px #161513">09.44.00</span>
<span class="t tdd" style="left:1349.47px;top:684.70px;font-size:16px;letter-spacing:0.744px;color:#161513;-webkit-text-stroke:0.2px #161513">AM</span>
<span class="t tdd" style="left:1406.28px;top:684.70px;font-size:16px;letter-spacing:1.917px;color:#161513;-webkit-text-stroke:0.2px #161513">12/3/25</span>
<span class="t tdd" style="left:1475.28px;top:684.70px;font-size:16px;letter-spacing:0.438px;color:#161513;-webkit-text-stroke:0.2px #161513">12.37.20</span>
<span class="t tdd" style="left:1546.07px;top:684.70px;font-size:16px;letter-spacing:0.744px;color:#161513;-webkit-text-stroke:0.2px #161513">AM</span>
<svg class="ic" style="left:1620px;top:680px" width="24" height="24" viewBox="0 0 24 24"><g fill="none" stroke="#161513" stroke-width="2"><rect x="5" y="6" width="15.2" height="12"/><path d="M8 8.8V15.8" /><path d="M7 19V20.8M17.2 19V20.8"/></g><g fill="none" stroke="#161513"><circle cx="14.9" cy="12.1" r="1.6" stroke-width="1.4"/><path d="M12.5 9.7L13.7 10.9M17.3 9.7L16.1 10.9M12.5 14.5L13.7 13.3M17.3 14.5L16.1 13.3" stroke-width="1.3"/></g></svg>
<svg class="ic" style="left:1712px;top:681px" width="24" height="24" viewBox="0 0 24 24"><g fill="none" stroke="#161513" stroke-width="1.9"><circle cx="12.4" cy="13.5" r="5.85"/><path d="M9 4.4H16.15"/><path d="M16.6 8.8L19.6 7"/><path d="M9.9 11.4L12.7 13.9H15.8" stroke-width="1.7"/></g></svg>
<div class="hl" style="top:719px"></div>
</div>
<div role="row">
<svg class="ic" style="left:24px;top:735px" width="16" height="16" viewBox="0 0 16 16"><rect x="0.8" y="0.8" width="14.4" height="14.4" rx="2.4" fill="none" stroke="#161513" stroke-width="1.6"/></svg>
<div class="badge bl" style="top:731px;width:80px"></div>
<a href="#" class="t td" style="left:67.28px;top:733.70px;font-size:16px;letter-spacing:0.899px;color:#00688c;-webkit-text-stroke:0.2px #00688c">1055</a>
<span class="t td" style="left:430.07px;top:733.70px;font-size:16px;letter-spacing:-0.678px;color:#161513;-webkit-text-stroke:0.2px #161513">AV_FRAME</span>
<span class="t td" style="left:598.88px;top:733.70px;font-size:16px;letter-spacing:1.241px;color:#161513;-webkit-text-stroke:0.2px #161513">11</span>
<span class="t td" style="left:706.79px;top:733.70px;font-size:16px;letter-spacing:-0.172px;color:#161513;-webkit-text-stroke:0.2px #161513">Each</span>
<span class="t bd" style="left:1095.28px;top:733.00px;font-size:13.6px;letter-spacing:-0.114px;color:#161513;-webkit-text-stroke:0.2px #161513">Released</span>
<span class="t tdd" style="left:1210.20px;top:732.70px;font-size:16px;letter-spacing:1.829px;color:#161513;-webkit-text-stroke:0.2px #161513">8/15/25</span>
<span class="t tdd" style="left:1279.27px;top:732.70px;font-size:16px;letter-spacing:0.353px;color:#161513;-webkit-text-stroke:0.2px #161513">07.00.00</span>
<span class="t tdd" style="left:1349.47px;top:732.70px;font-size:16px;letter-spacing:0.744px;color:#161513;-webkit-text-stroke:0.2px #161513">AM</span>
<span class="t tdd" style="left:1406.80px;top:732.70px;font-size:16px;letter-spacing:1.829px;color:#161513;-webkit-text-stroke:0.2px #161513">8/15/25</span>
<span class="t tdd" style="left:1475.88px;top:732.70px;font-size:16px;letter-spacing:0.353px;color:#161513;-webkit-text-stroke:0.2px #161513">08.06.00</span>
<span class="t tdd" style="left:1546.07px;top:732.70px;font-size:16px;letter-spacing:0.744px;color:#161513;-webkit-text-stroke:0.2px #161513">AM</span>
<svg class="ic" style="left:1620px;top:728px" width="24" height="24" viewBox="0 0 24 24"><g fill="none" stroke="#161513" stroke-width="2"><rect x="5" y="6" width="15.2" height="12"/><path d="M8 8.8V15.8" /><path d="M7 19V20.8M17.2 19V20.8"/></g><g fill="none" stroke="#161513"><circle cx="14.9" cy="12.1" r="1.6" stroke-width="1.4"/><path d="M12.5 9.7L13.7 10.9M17.3 9.7L16.1 10.9M12.5 14.5L13.7 13.3M17.3 14.5L16.1 13.3" stroke-width="1.3"/></g></svg>
<svg class="ic" style="left:1712px;top:729px" width="24" height="24" viewBox="0 0 24 24"><g fill="none" stroke="#161513" stroke-width="1.9"><circle cx="12.4" cy="13.5" r="5.85"/><path d="M9 4.4H16.15"/><path d="M16.6 8.8L19.6 7"/><path d="M9.9 11.4L12.7 13.9H15.8" stroke-width="1.7"/></g></svg>
<div class="hl" style="top:767px"></div>
</div>
<div role="row">
<svg class="ic" style="left:24px;top:783px" width="16" height="16" viewBox="0 0 16 16"><rect x="0.8" y="0.8" width="14.4" height="14.4" rx="2.4" fill="none" stroke="#161513" stroke-width="1.6"/></svg>
<div class="badge bl" style="top:779px;width:80px"></div>
<a href="#" class="t td" style="left:66.89px;top:781.70px;font-size:16px;letter-spacing:0.954px;color:#00688c;-webkit-text-stroke:0.2px #00688c">M1-1304</a>
<span class="t td" style="left:428.79px;top:781.70px;font-size:16px;letter-spacing:-0.031px;color:#161513;-webkit-text-stroke:0.2px #161513">BJ-SSP-B2B-…</span>
<span class="t td" style="left:598.13px;top:781.70px;font-size:16px;letter-spacing:1.147px;color:#161513;-webkit-text-stroke:0.2px #161513">10</span>
<span class="t td" style="left:706.79px;top:781.70px;font-size:16px;letter-spacing:-0.172px;color:#161513;-webkit-text-stroke:0.2px #161513">Each</span>
<span class="t bd" style="left:1095.28px;top:781.00px;font-size:13.6px;letter-spacing:-0.114px;color:#161513;-webkit-text-stroke:0.2px #161513">Released</span>
<span class="t tdd" style="left:1210.20px;top:780.70px;font-size:16px;letter-spacing:1.829px;color:#161513;-webkit-text-stroke:0.2px #161513">8/22/25</span>
<span class="t tdd" style="left:1279.27px;top:780.70px;font-size:16px;letter-spacing:0.353px;color:#161513;-webkit-text-stroke:0.2px #161513">04.59.00</span>
<span class="t tdd" style="left:1348.19px;top:780.70px;font-size:16px;letter-spacing:0.625px;color:#161513;-webkit-text-stroke:0.2px #161513">PM</span>
<span class="t tdd" style="left:1406.80px;top:780.70px;font-size:16px;letter-spacing:1.829px;color:#161513;-webkit-text-stroke:0.2px #161513">8/22/25</span>
<span class="t tdd" style="left:1475.88px;top:780.70px;font-size:16px;letter-spacing:0.353px;color:#161513;-webkit-text-stroke:0.2px #161513">04.59.00</span>
<span class="t tdd" style="left:1544.79px;top:780.70px;font-size:16px;letter-spacing:0.625px;color:#161513;-webkit-text-stroke:0.2px #161513">PM</span>
<svg class="ic" style="left:1712px;top:777px" width="24" height="24" viewBox="0 0 24 24"><g fill="none" stroke="#161513" stroke-width="1.9"><circle cx="12.4" cy="13.5" r="5.85"/><path d="M9 4.4H16.15"/><path d="M16.6 8.8L19.6 7"/><path d="M9.9 11.4L12.7 13.9H15.8" stroke-width="1.7"/></g></svg>
<div class="hl" style="top:815px"></div>
</div>
  <div id="vline"></div>
</main>
</body>
</html>
